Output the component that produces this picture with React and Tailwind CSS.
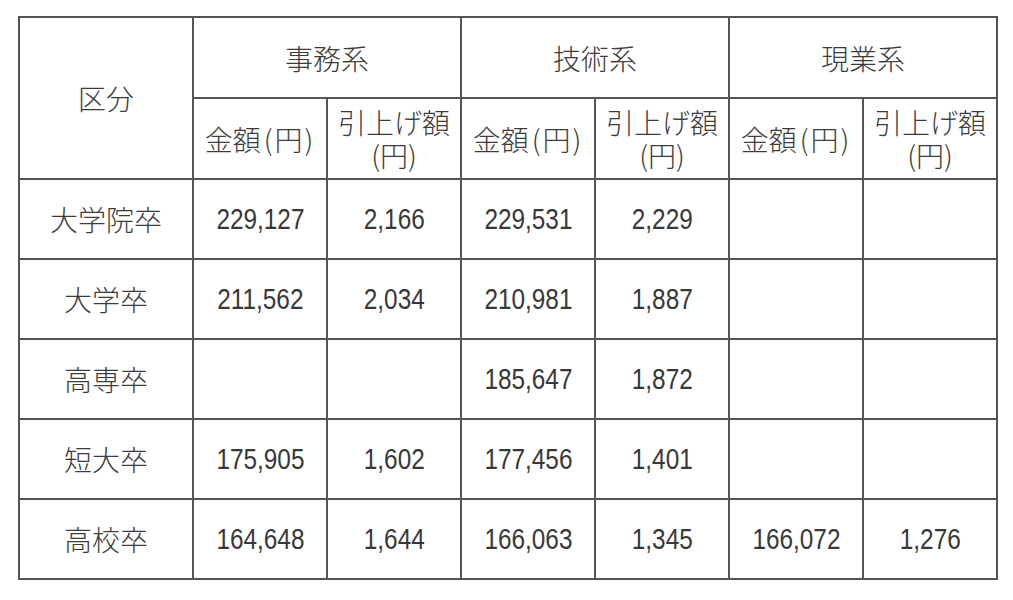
import React from "react";

const jp = "font-['Noto_Sans_CJK_JP',sans-serif] font-light text-[28px] text-[#3c3c3c]";

const rows = [
  ["大学院卒", "229,127", "2,166", "229,531", "2,229", "", ""],
  ["大学卒", "211,562", "2,034", "210,981", "1,887", "", ""],
  ["高専卒", "", "", "185,647", "1,872", "", ""],
  ["短大卒", "175,905", "1,602", "177,456", "1,401", "", ""],
  ["高校卒", "164,648", "1,644", "166,063", "1,345", "166,072", "1,276"],
];

function Cell({ children, className = "" }) {
  return (
    <div className={`bg-white flex items-center justify-center ${className}`}>
      {children}
    </div>
  );
}

function Num({ v }) {
  return (
    <span className="inline-block scale-x-[0.84] font-['Liberation_Sans',Arial,sans-serif] text-[29px] leading-none text-[#383838]">
      {v}
    </span>
  );
}

function SubHead() {
  return (
    <>
      <Cell className={jp}>
        <span>金額</span>
        <span className="tracking-[2px] pl-[3px]">(円)</span>
      </Cell>
      <Cell className={jp}>
        <p className="text-center leading-[33px]">
          引上げ額
          <br />
          (円)
        </p>
      </Cell>
    </>
  );
}

export default function App() {
  return (
    <div className="w-[1013px] h-[600px] bg-white pt-[16px] pl-[18px]">
      <div className="grid w-fit grid-cols-[172px_repeat(6,132px)] grid-rows-[79px_79px_repeat(5,78px)] gap-[2px] bg-[#555] p-[2px]">
        <Cell className={`${jp} row-span-2`}>区分</Cell>
        <Cell className={`${jp} col-span-2`}>事務系</Cell>
        <Cell className={`${jp} col-span-2`}>技術系</Cell>
        <Cell className={`${jp} col-span-2`}>現業系</Cell>
        <SubHead />
        <SubHead />
        <SubHead />
        {rows.map((r) => (
          <React.Fragment key={r[0]}>
            <Cell className={jp}>{r[0]}</Cell>
            {r.slice(1).map((v, i) => (
              <Cell key={i}>{v && <Num v={v} />}</Cell>
            ))}
          </React.Fragment>
        ))}
      </div>
    </div>
  );
}
